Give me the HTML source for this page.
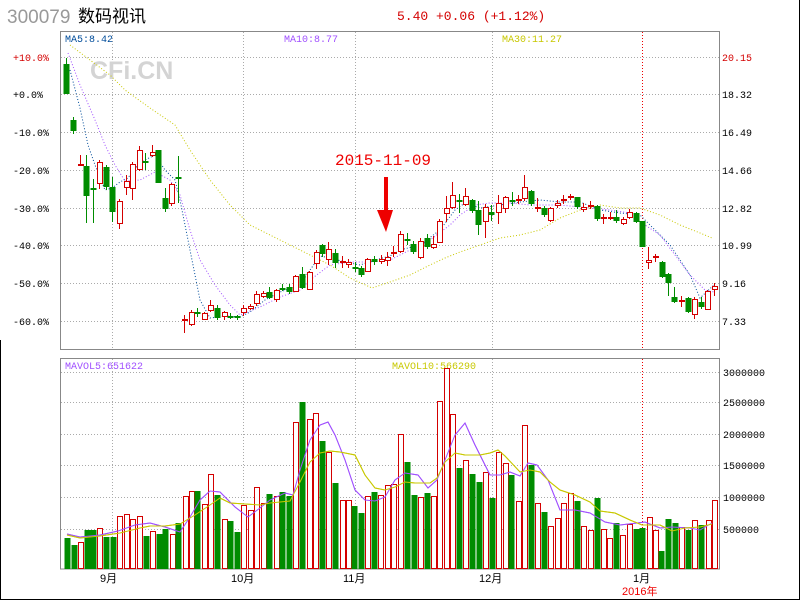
<!DOCTYPE html>
<html><head><meta charset="utf-8"><style>
html,body{margin:0;padding:0;background:#fff;}
body{width:800px;height:600px;overflow:hidden;position:relative;}
svg{position:absolute;left:0;top:0;}
</style></head><body>
<svg id="s" width="800" height="600" xmlns="http://www.w3.org/2000/svg" font-family="'Liberation Mono', monospace">
<rect x="0" y="0" width="800" height="600" fill="#fff"/>
<line x1="799.5" y1="0" x2="799.5" y2="600" stroke="#000"/>
<line x1="0" y1="599.5" x2="800" y2="599.5" stroke="#000"/>
<line x1="0.5" y1="340" x2="0.5" y2="600" stroke="#000"/>
<text x="7" y="23" font-family="'Liberation Sans',sans-serif" font-size="19" fill="#999">300079</text>
<text x="78" y="22" font-family="'Liberation Sans','Noto Sans CJK SC',sans-serif" font-size="17" fill="#000">数码视讯</text>
<text x="397" y="20" font-size="13" fill="#d40000">5.40 +0.06 (+1.12%)</text>
<g id="grid" stroke="#aaa" stroke-dasharray="1,2" fill="none"></g>
<text x="90" y="79" font-family="'Liberation Sans',sans-serif" font-weight="bold" font-size="25" fill="#d4d4d4">CFi.CN</text>
<rect x="60.5" y="31.5" width="659" height="318" fill="none" stroke="#888"/>
<rect x="60.5" y="358.5" width="659" height="210.5" fill="none" stroke="#888"/>
<line x1="642.5" y1="32" x2="642.5" y2="349" stroke="#e00" stroke-dasharray="1,2"/>
<line x1="642.5" y1="359" x2="642.5" y2="569" stroke="#e00" stroke-dasharray="1,2"/>
<text x="65" y="42" font-size="10" fill="#004c9a">MA5:8.42</text>
<text x="284" y="42" font-size="10" fill="#a050ff">MA10:8.77</text>
<text x="502" y="42" font-size="10" fill="#c8c800">MA30:11.27</text>
<text x="65" y="369" font-size="10" fill="#a050ff">MAVOL5:651622</text>
<text x="392" y="369" font-size="10" fill="#c8c800">MAVOL10:566290</text>
<g id="lab" font-size="10"></g>
<g id="ma"></g>
<g id="c"></g>
<g id="v"></g>
<text x="335" y="165" font-size="16" fill="#e00">2015-11-09</text>
<polygon points="384,177 388,177 388,210 393,210 386,232 377,210 384,210" fill="#e00"/>
<text x="100" y="582" font-family="'Liberation Sans','Noto Sans CJK SC',sans-serif" font-size="11" fill="#000">9月</text>
<text x="231" y="582" font-family="'Liberation Sans','Noto Sans CJK SC',sans-serif" font-size="11" fill="#000">10月</text>
<text x="343" y="582" font-family="'Liberation Sans','Noto Sans CJK SC',sans-serif" font-size="11" fill="#000">11月</text>
<text x="479" y="582" font-family="'Liberation Sans','Noto Sans CJK SC',sans-serif" font-size="11" fill="#000">12月</text>
<text x="633" y="582" font-family="'Liberation Sans','Noto Sans CJK SC',sans-serif" font-size="11" fill="#000">1月</text>
<text x="622" y="595" font-family="'Liberation Sans','Noto Sans CJK SC',sans-serif" font-size="11" fill="#e00">2016年</text>
</svg>
<script>
var NS="http://www.w3.org/2000/svg";
function el(p,t,a,txt){var e=document.createElementNS(NS,t);for(var k in a)e.setAttribute(k,a[k]);if(txt!=null)e.textContent=txt;document.getElementById(p).appendChild(e);return e;}
var R="#d40000",G="#008c00";
var hy=[57,94,132,170,208,245,283,321];
hy.forEach(function(y){el("grid","line",{x1:61,y1:y+.5,x2:719,y2:y+.5});});
[112,243,355,492].forEach(function(x){el("grid","line",{x1:x+.5,y1:32,x2:x+.5,y2:349});el("grid","line",{x1:x+.5,y1:359,x2:x+.5,y2:569});});
[372,402,434,465,497,529].forEach(function(y){el("grid","line",{x1:61,y1:y+.5,x2:719,y2:y+.5});});
var pl=["+10.0%","+0.0%","-10.0%","-20.0%","-30.0%","-40.0%","-50.0%","-60.0%"];
var rl=["20.15","18.32","16.49","14.66","12.82","10.99","9.16","7.33"];
hy.forEach(function(y,i){el("lab","text",{x:13,y:y+4,fill:i==0?"#d40000":"#000"},pl[i]);el("lab","text",{x:722,y:y+4,fill:i==0?"#d40000":"#000"},rl[i]);});
var vl=["3000000","2500000","2000000","1500000","1000000","500000"];
[372,402,434,465,497,529].forEach(function(y,i){el("lab","text",{x:723,y:y+4,fill:"#000"},vl[i]);});
var C=[[66,64,94,G,58,94],[73,120,131,G,117,134],[80,164,165,R,155,165],[86,166,196,G,155,223],[93,188,190,G,179,223],[99,162,183,R,160,189],[106,167,187,G,165,190],[112,187,212,G,177,222],[119,201,223,R,199,229],[126,181,187,R,175,195],[132,164,188,R,162,200],[139,150,169,R,146,171],[145,161,163,G,153,170],[152,152,155,R,145,157],[158,150,183,G,150,183],[165,198,209,G,188,212],[171,184,203,R,183,206],[178,177,179,G,156,203],
[184,319,320,R,315,333],[191,312,324,R,310,326],[197,312,313,G,308,317],[204,313,319,R,312,320],[210,305,310,R,300,312],[217,308,318,G,305,320],[224,312,316,R,311,320],[230,316,317,G,313,319],[237,316,318,G,315,320],[243,308,312,R,305,316],[250,306,308,R,304,310],[256,294,303,R,291,306],[263,293,296,R,291,298],[269,292,298,G,287,299],[276,290,299,R,289,302],[282,288,289,G,284,291],[289,287,292,G,284,294],[295,276,291,R,275,292],[302,274,288,G,267,289],[309,272,289,R,271,290],[316,252,263,R,250,269],[322,245,254,G,244,257],[328,249,259,R,242,265],[335,253,263,G,249,268],[342,261,262,R,256,268],[348,262,264,R,259,268],[355,267,268,G,262,272],[361,268,275,G,266,277],[367,259,271,R,258,272],[374,259,262,G,256,265],[381,259,261,R,255,264],[387,257,260,R,252,266],[393,252,253,R,246,257],[400,234,251,R,231,253],[407,239,240,G,233,245],[413,244,252,G,241,254],[420,241,257,R,238,259],[427,238,247,G,234,249],[433,244,247,R,236,249],[439,221,242,R,219,243],[446,208,213,R,196,222],[452,195,207,R,182,209],[459,200,201,G,194,213],[465,196,204,R,188,206],[472,200,211,G,199,213],[478,210,225,G,201,235],[485,207,221,R,204,238],[491,212,215,G,205,221],[498,203,212,R,195,224],[505,197,208,R,196,213],[512,200,201,G,192,206],[518,199,200,R,195,204],[524,187,198,R,175,201],[531,191,204,G,190,206],[537,207,208,R,198,212],[544,208,215,G,206,217],[550,208,220,R,207,222],[557,203,205,R,200,208],[563,199,200,R,195,204],[570,196,197,R,194,200],[577,197,207,G,197,209],[583,207,209,R,203,212],[590,205,206,R,201,209],[597,206,219,G,205,221],[603,217,218,R,214,224],[610,217,218,R,212,220],[616,217,221,G,210,223],[623,219,223,R,217,225],[629,212,217,R,209,219],[636,213,222,G,212,223],[642,221,247,G,221,247],[648,260,262,R,247,269],[655,256,257,R,254,262],[662,262,277,G,261,278],[668,274,283,G,273,296],[674,297,302,G,287,303],[681,300,301,R,296,307],[688,298,312,G,297,313],[694,299,314,R,297,319],[701,302,307,G,297,309],[707,291,309,R,290,310],[714,286,289,R,283,296]];
C.forEach(function(c){var x=c[0],col=c[3];
 el("c","line",{x1:x+.5,y1:c[4],x2:x+.5,y2:c[5],stroke:col});
 var h=Math.max(1,c[2]-c[1]);
 if(col==R){el("c","rect",{x:x-2+.5,y:c[1]+.5,width:5,height:h,fill:h<2?R:"#fff",stroke:R});}
 else el("c","rect",{x:x-2.5,y:c[1],width:6,height:Math.max(2,h),fill:G});
});
var V=[[67,538,G],[74,545,G],[80,542,R],[87,530,G],[93,530,G],[99,528,R],[106,537,G],[113,537,G],[119,516,R],[126,514,R],[132,519,R],[139,516,R],[146,536,G],[152,531,R],[159,534,G],[165,529,G],[172,534,R],[178,523,G],[185,496,R],[191,491,R],[197,491,G],[204,504,R],[210,474,R],[217,495,G],[224,519,R],[230,521,G],[237,532,G],[243,505,R],[250,510,R],[256,487,R],[263,503,R],[269,494,G],[276,496,R],[282,492,G],[289,496,G],[295,422,R],[302,402,G],[309,419,R],[315,413,R],[322,441,G],[328,452,R],[335,483,G],[342,500,R],[348,500,R],[354,506,G],[361,513,G],[367,496,R],[374,492,G],[380,495,R],[387,485,R],[393,484,R],[400,434,R],[407,462,G],[414,495,G],[420,497,R],[427,493,G],[433,496,R],[439,401,R],[446,368,R],[452,414,R],[459,468,G],[465,460,R],[472,474,G],[479,482,G],[485,472,R],[492,498,G],[498,452,R],[505,463,R],[511,475,G],[518,501,R],[524,425,R],[531,465,G],[537,503,R],[544,512,G],[550,526,R],[557,518,R],[563,503,R],[570,493,R],[577,501,G],[583,526,R],[590,530,R],[597,498,G],[603,529,R],[609,538,R],[616,523,G],[622,535,R],[629,524,R],[636,529,G],[642,528,G],[649,517,R],[655,530,R],[661,551,G],[668,519,G],[675,523,G],[681,527,R],[688,530,G],[694,520,R],[701,525,G],[708,520,R],[714,500,R]];
V.forEach(function(v){if(v[2]==R)el("v","rect",{x:v[0]-2+.5,y:v[1]+.5,width:5,height:568-v[1],fill:"#fff",stroke:R});else el("v","rect",{x:v[0]-2.5,y:v[1],width:6,height:569-v[1],fill:G});});
function line(pts,col,dash){el("ma","polyline",{points:pts.map(function(p){return p.join(",")}).join(" "),fill:"none",stroke:col,"stroke-width":1,"stroke-dasharray":dash||"none"});}
line([[70,70],[80,108],[88,145],[95,165],[105,190],[112,188],[120,182],[128,178],[135,168],[145,160],[155,155],[165,170],[175,180],[180,200],[190,250],[200,300],[210,318],[225,316],[240,317],[250,312],[265,300],[280,292],[300,285],[310,270],[320,256],[330,258],[345,262],[360,265],[375,260],[390,256],[400,250],[420,245],[440,230],[455,210],[465,203],[480,208],[500,205],[520,202],[540,200],[560,202],[580,202],[600,210],[620,213],[640,215],[650,225],[670,245],[690,275],[700,298],[714,285]],"#004c9a","1,2");
line([[68,53],[80,85],[95,120],[105,145],[115,165],[125,181],[140,180],[155,172],[170,180],[180,195],[190,230],[200,260],[215,285],[230,305],[240,315],[260,307],[280,297],[300,290],[310,280],[330,265],[350,262],[370,262],[390,260],[410,250],[430,240],[450,225],[460,215],[475,205],[490,203],[510,203],[530,205],[560,205],[590,208],[610,210],[630,213],[645,225],[660,235],[675,255],[690,275],[705,290],[714,292]],"#a050ff","1,2");
line([[70,45],[90,60],[110,75],[125,90],[150,108],[175,125],[190,150],[210,180],[230,205],[250,225],[270,235],[290,245],[310,255],[330,265],[350,278],[372,288],[390,282],[410,275],[430,265],[445,258],[460,252],[480,245],[500,238],[520,235],[540,230],[560,218],[580,210],[600,205],[620,208],[640,208],[660,215],[680,225],[700,233],[712,238]],"#c8c800","1,2");
line([[67,534],[80,537],[100,535],[118,531],[135,525],[150,523],[165,527],[180,532],[190,517],[200,500],[210,491],[220,492],[235,507],[248,517],[260,508],[270,500],[285,493],[293,495],[300,470],[310,440],[320,425],[328,422],[335,435],[345,460],[355,490],[365,500],[375,501],[385,497],[395,480],[405,473],[418,475],[428,488],[437,480],[445,460],[455,435],[465,423],[475,445],[490,475],[500,475],[510,472],[520,476],[528,463],[537,465],[548,480],[560,510],[575,510],[590,513],[605,522],[620,525],[645,522],[660,528],[672,527],[690,528],[700,530],[712,523]],"#a050ff");
line([[67,535],[80,538],[100,536],[120,533],[140,528],[150,526],[165,526],[180,524],[195,515],[210,505],[220,498],[230,503],[245,504],[260,505],[270,503],[290,501],[300,482],[310,462],[320,453],[330,451],[340,452],[355,455],[365,475],[375,488],[385,490],[395,487],[405,482],[415,483],[430,483],[437,478],[445,462],[455,453],[465,455],[480,455],[490,453],[498,450],[505,456],[520,472],[530,470],[540,472],[550,482],[560,490],[575,495],[590,502],[600,511],[615,513],[630,520],[642,525],[660,525],[672,531],[685,528],[700,527],[712,524]],"#c8c800");
var ma=document.getElementById("ma");var s=document.getElementById("s");
var vol=[ma.children[3].cloneNode(),ma.children[4].cloneNode()];vol.forEach(function(n){s.appendChild(n)});
</script>
</body></html>
